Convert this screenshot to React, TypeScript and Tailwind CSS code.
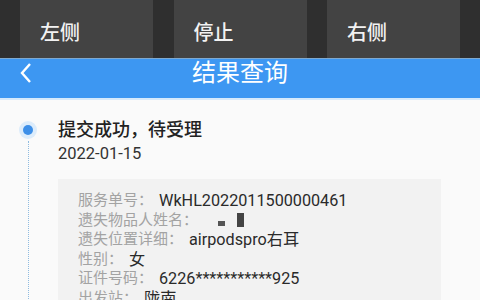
import React from 'react';

const rows: { label: string; value: React.ReactNode }[] = [
  { label: '服务单号：', value: 'WkHL2022011500000461' },
  {
    label: '遗失物品人姓名：',
    value: (
      <span className="relative inline-block h-[16px] w-[40px] align-middle">
        <span className="absolute left-[14px] top-[8px] h-[5px] w-[7px] bg-[#555]" />
        <span className="absolute left-[33px] top-[0px] h-[14px] w-[7px] bg-[#444]" />
      </span>
    ),
  },
  { label: '遗失位置详细：', value: 'airpodspro右耳' },
  { label: '性别：', value: '女' },
  { label: '证件号码：', value: '6226***********925' },
  { label: '出发站：', value: '陇南' },
];

const ControlButton = ({ text }: { text: string }) => (
  <div className="flex h-full w-[133px] items-center bg-[#434343] pl-[20px] pt-[8px] text-[20px] font-medium text-[#f2f2f2]">
    {text}
  </div>
);

export default function App() {
  return (
    <div
      className="h-[300px] w-[480px] overflow-hidden bg-[#fafafa]"
      style={{ fontFamily: 'Roboto, "Noto Sans CJK SC", sans-serif' }}
    >
      <div className="flex h-[58px] justify-between bg-[#2f2f2f] px-[20px]">
        <ControlButton text="左侧" />
        <ControlButton text="停止" />
        <ControlButton text="右侧" />
      </div>
      <div className="relative flex h-[40px] items-center justify-center border-t border-[#7ea9cf] bg-[#3d97f2]">
        <svg className="absolute left-[19px] top-[3px]" width="14" height="22" viewBox="0 0 14 22">
          <path d="M11 2 L3 11 L11 20" fill="none" stroke="#fff" strokeWidth="2.4" />
        </svg>
        <span className="-mt-[12px] text-[24px] text-white">结果查询</span>
      </div>
      <div className="h-[2px] bg-[#d6eafc]" />
      <div className="flex pt-[18px]">
        <div className="flex w-[58px] flex-col items-center pr-[2px]">
          <div className="mt-[3px] flex h-[18px] w-[18px] items-center justify-center rounded-full bg-[#dcecfb]">
            <div className="h-[10px] w-[10px] rounded-full bg-[#3d8fe8]" />
          </div>
          <div className="mt-[2px] h-[200px] border-l border-dotted border-[#8fbbe0]" />
        </div>
        <div className="flex-1">
          <div className="text-[18px] font-medium leading-[24px] text-[#222]">提交成功，待受理</div>
          <div className="mt-[1px] text-[16.5px] leading-[22px] text-[#333]">2022-01-15</div>
          <div className="mt-[14px] w-[383px] bg-[#f2f2f2] px-[20px] pt-[12px] pb-[10px]">
            {rows.map((r) => (
              <div key={r.label} className="flex items-center leading-[19.5px]">
                <span className="text-[15px] text-[#a3a3a3]">{r.label}</span>
                <span className="ml-[6px] text-[16.2px] text-[#2a2a2a]">{r.value}</span>
              </div>
            ))}
          </div>
        </div>
      </div>
    </div>
  );
}
